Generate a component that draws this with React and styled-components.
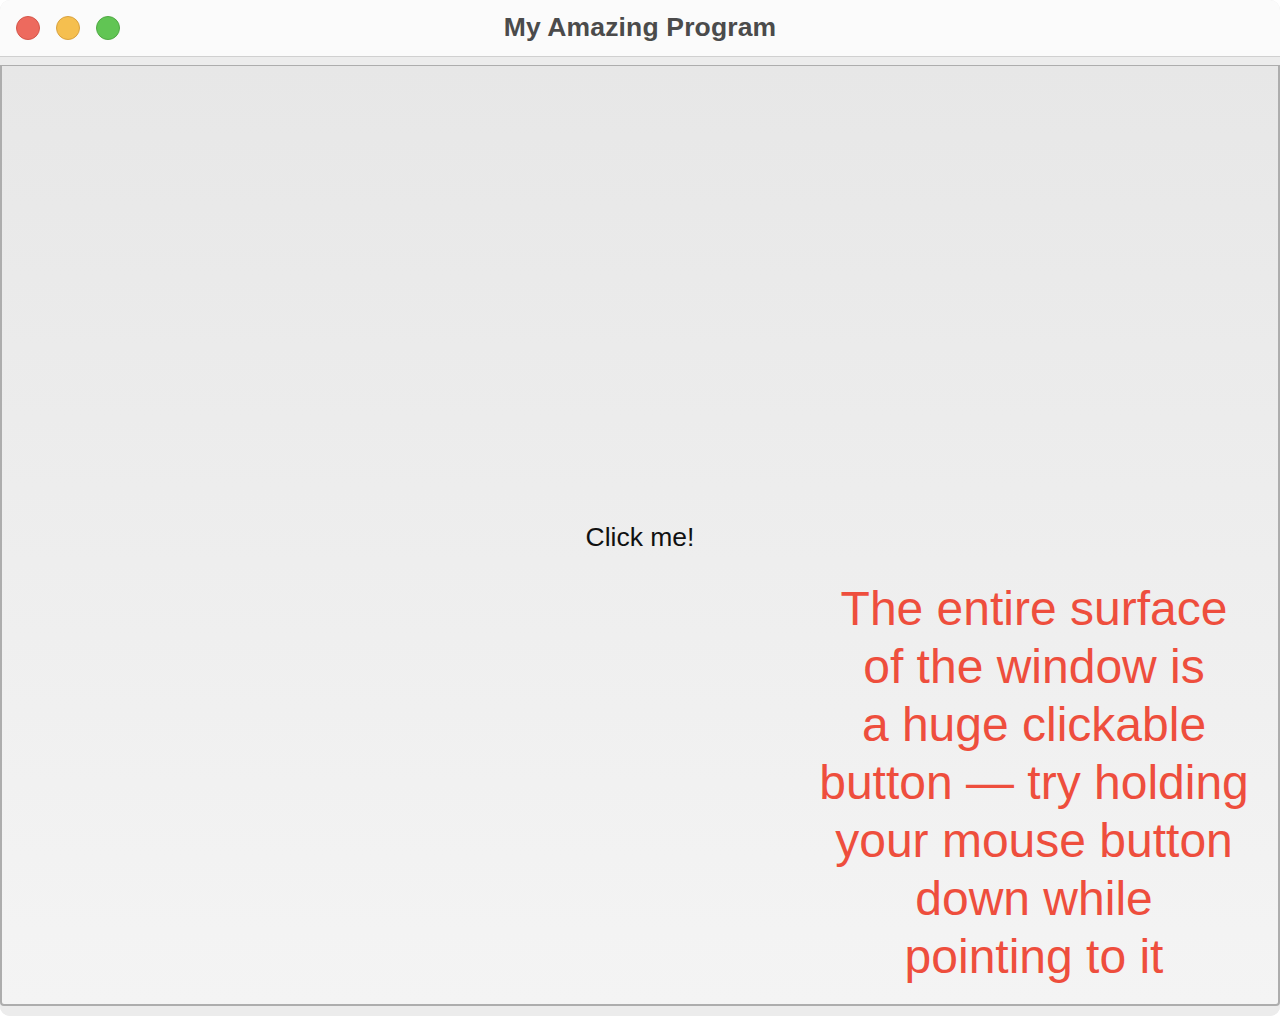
import React from 'react';
import styled, { createGlobalStyle } from 'styled-components';

const GlobalStyle = createGlobalStyle`
  html, body {
    margin: 0;
    padding: 0;
    background: #ffffff;
  }
  body {
    font-family: "Liberation Sans", Arial, sans-serif;
  }
`;

const Window = styled.div`
  width: 1280px;
  height: 1016px;
  display: flex;
  flex-direction: column;
  background: #e9e9e9;
  border-radius: 10px;
  overflow: hidden;
  box-sizing: border-box;
`;

const TitleBar = styled.div`
  height: 56px;
  flex-shrink: 0;
  display: grid;
  grid-template-columns: 1fr auto 1fr;
  align-items: center;
  background: #fbfbfb;
  border-bottom: 1px solid #d0d0d0;
  padding: 0 16px;
`;

const Lights = styled.div`
  display: flex;
  gap: 16px;
`;

const Light = styled.span`
  width: 24px;
  height: 24px;
  border-radius: 50%;
  box-sizing: border-box;
  background: ${props => props.bg};
  border: 1px solid ${props => props.edge};
`;

const Title = styled.div`
  font-size: 26.5px;
  font-weight: 700;
  color: #4b4b4b;
  letter-spacing: 0.15px;
  margin-top: -2px;
`;

const Body = styled.div`
  flex: 1;
  display: flex;
  padding: 8px 0 10px 0;
  background: #ececec;
`;

const BigButton = styled.div`
  position: relative;
  flex: 1;
  display: flex;
  align-items: center;
  justify-content: center;
  box-sizing: border-box;
  border-top: 1px solid #adadad;
  border-left: 2px solid #adadad;
  border-right: 2px solid #adadad;
  border-bottom: 2px solid #adadad;
  border-radius: 0 0 4px 4px;
  background: linear-gradient(to bottom, #e7e7e7 0%, #ededed 45%, #f4f4f4 100%);
  cursor: pointer;
`;

const Label = styled.span`
  font-size: 26.5px;
  color: #111111;
  margin-top: 4px;
`;

const Note = styled.div`
  position: absolute;
  right: 24px;
  bottom: 18px;
  width: 440px;
  text-align: center;
  font-size: 48px;
  line-height: 58px;
  color: #ee4e3d;
`;

export default function App() {
  return (
    <>
      <GlobalStyle />
      <Window>
        <TitleBar>
          <Lights>
            <Light bg="#ed6a5e" edge="#d5564a" />
            <Light bg="#f5bf4f" edge="#d9a23f" />
            <Light bg="#61c554" edge="#50a944" />
          </Lights>
          <Title>My Amazing Program</Title>
          <div />
        </TitleBar>
        <Body>
          <BigButton>
            <Label>Click me!</Label>
            <Note>
              The entire surface<br />
              of the window is<br />
              a huge clickable<br />
              button — try holding<br />
              your mouse button<br />
              down while<br />
              pointing to it
            </Note>
          </BigButton>
        </Body>
      </Window>
    </>
  );
}
